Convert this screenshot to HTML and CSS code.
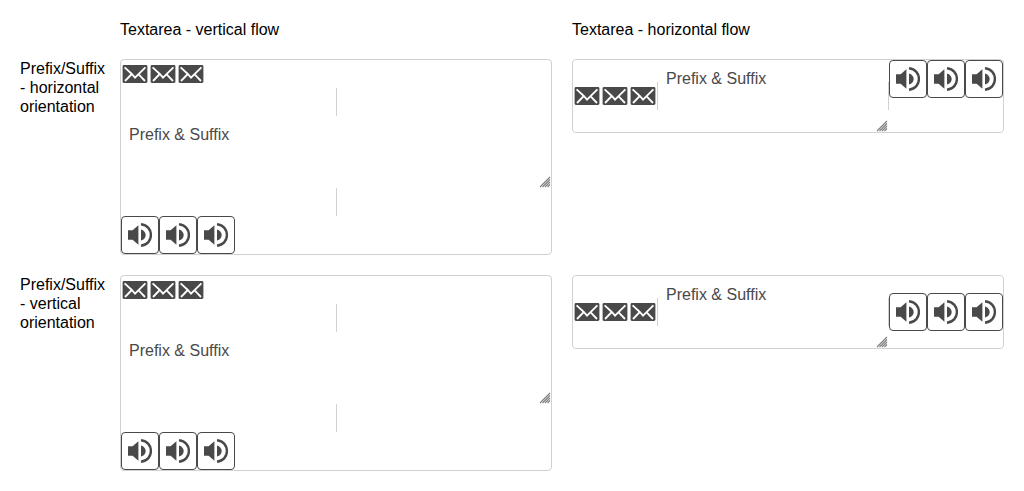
FILE: index.html
```html
<!DOCTYPE html>
<html lang="en">
<head>
<meta charset="utf-8">
<title>Textarea prefix and suffix</title>
<link rel="stylesheet" href="styles.css">
</head>
<body>
<svg class="sprite" aria-hidden="true">
  <symbol id="mail" viewBox="0 0 28 28">
    <rect x="1.6" y="5" width="24.8" height="18" rx="1.4" fill="currentColor"/>
    <path d="M3.6 7.4 L10.8 14 L14 17.6 L24.4 7.4 M4 21 L10.8 14 M24 21 L17.4 14.2" fill="none" stroke="#fff" stroke-width="1.8"/>
  </symbol>
  <symbol id="volume" viewBox="0 0 24 24">
    <path d="M0 7.2H4.6L10.4 2.2V21.8L4.6 16.8H0Z M13 6.4C16 7.2 17.7 9.4 17.7 12S16 16.8 13 17.6Z" fill="currentColor"/>
    <path d="M13 1.3C19.4 2 22.9 6.6 22.9 12S19.4 22 13 22.7" fill="none" stroke="currentColor" stroke-width="2.4"/>
  </symbol>
</svg>
<main class="grid">
  <p class="heading heading-first">Textarea - vertical flow</p>
  <p class="heading">Textarea - horizontal flow</p>

  <p class="label">Prefix/Suffix<br>- horizontal<br>orientation</p>
  <div class="cell"><div class="field vertical">
    <div class="prefix"><svg class="mail"><use href="#mail"/></svg><svg class="mail"><use href="#mail"/></svg><svg class="mail"><use href="#mail"/></svg></div>
    <span class="separator"></span>
    <textarea class="input" aria-label="Vertical flow, horizontal orientation" placeholder="Prefix &amp; Suffix"></textarea>
    <span class="separator"></span>
    <div class="suffix"><button class="button" type="button" aria-label="Volume"><svg class="volume"><use href="#volume"/></svg></button><button class="button" type="button" aria-label="Volume"><svg class="volume"><use href="#volume"/></svg></button><button class="button" type="button" aria-label="Volume"><svg class="volume"><use href="#volume"/></svg></button></div>
  </div></div>
  <div class="cell"><div class="field horizontal">
    <div class="prefix"><svg class="mail"><use href="#mail"/></svg><svg class="mail"><use href="#mail"/></svg><svg class="mail"><use href="#mail"/></svg></div>
    <span class="separator"></span>
    <textarea class="input" aria-label="Horizontal flow, horizontal orientation" placeholder="Prefix &amp; Suffix"></textarea>
    <span class="separator"></span>
    <div class="suffix suffix-top"><button class="button" type="button" aria-label="Volume"><svg class="volume"><use href="#volume"/></svg></button><button class="button" type="button" aria-label="Volume"><svg class="volume"><use href="#volume"/></svg></button><button class="button" type="button" aria-label="Volume"><svg class="volume"><use href="#volume"/></svg></button></div>
  </div></div>

  <p class="label">Prefix/Suffix<br>- vertical<br>orientation</p>
  <div class="cell"><div class="field vertical">
    <div class="prefix"><svg class="mail"><use href="#mail"/></svg><svg class="mail"><use href="#mail"/></svg><svg class="mail"><use href="#mail"/></svg></div>
    <span class="separator"></span>
    <textarea class="input" aria-label="Vertical flow, vertical orientation" placeholder="Prefix &amp; Suffix"></textarea>
    <span class="separator"></span>
    <div class="suffix"><button class="button" type="button" aria-label="Volume"><svg class="volume"><use href="#volume"/></svg></button><button class="button" type="button" aria-label="Volume"><svg class="volume"><use href="#volume"/></svg></button><button class="button" type="button" aria-label="Volume"><svg class="volume"><use href="#volume"/></svg></button></div>
  </div></div>
  <div class="cell"><div class="field horizontal">
    <div class="prefix"><svg class="mail"><use href="#mail"/></svg><svg class="mail"><use href="#mail"/></svg><svg class="mail"><use href="#mail"/></svg></div>
    <span class="separator"></span>
    <textarea class="input" aria-label="Horizontal flow, vertical orientation" placeholder="Prefix &amp; Suffix"></textarea>
    <span class="separator"></span>
    <div class="suffix"><button class="button" type="button" aria-label="Volume"><svg class="volume"><use href="#volume"/></svg></button><button class="button" type="button" aria-label="Volume"><svg class="volume"><use href="#volume"/></svg></button><button class="button" type="button" aria-label="Volume"><svg class="volume"><use href="#volume"/></svg></button></div>
  </div></div>
</main>
</body>
</html>
```
FILE: styles.css
```css
* {
  box-sizing: border-box;
}

body {
  margin: 0;
  background: #fff;
  color: #000;
  font: 16px/19px "Liberation Sans", Arial, sans-serif;
}

.sprite {
  display: none;
}

.grid {
  display: grid;
  grid-template-columns: 100px minmax(0, 1fr) minmax(0, 1fr);
  row-gap: 20px;
  align-items: start;
  padding: 20px 0 20px 20px;
}

.heading,
.label {
  margin: 0;
}

.heading-first {
  grid-column: 2;
}

.cell {
  padding-right: 20px;
}

.field {
  display: flex;
  border: 1px solid #d1d1d1;
  border-radius: 4px;
  color: #494949;
}

.vertical {
  flex-direction: column;
}

.horizontal {
  align-items: center;
}

.prefix,
.suffix {
  display: flex;
  flex: none;
}

.suffix-top {
  align-self: flex-start;
}

.separator {
  flex: none;
  width: 1px;
  height: 28px;
  background: #d1d1d1;
}

.vertical .separator {
  align-self: center;
}

.mail {
  width: 28px;
  height: 28px;
}

.volume {
  display: block;
  width: 24px;
  height: 24px;
}

.input {
  display: block;
  flex: 1 1 auto;
  min-width: 0;
  height: 72px;
  margin: 0;
  padding: 9px 8px;
  border: 0;
  outline: 0;
  background: transparent;
  color: inherit;
  font: inherit;
}

.vertical .input {
  flex: none;
}

.input::placeholder {
  color: #494949;
  opacity: 1;
}

/* Diagonal grip lines in the lower right corner */
.input::-webkit-resizer {
  background-image: url("data:image/svg+xml,%3Csvg xmlns='http://www.w3.org/2000/svg' width='12' height='12'%3E%3Cpath d='M1 11L11 1M3.5 11L11 3.5M6 11L11 6M8.5 11L11 8.5' stroke='%23808080' stroke-width='1.2'/%3E%3C/svg%3E");
  background-position: right bottom;
  background-repeat: no-repeat;
}

.button {
  padding: 6px;
  border: 1px solid #494949;
  border-radius: 4px;
  background: #fff;
  color: #494949;
}
```
